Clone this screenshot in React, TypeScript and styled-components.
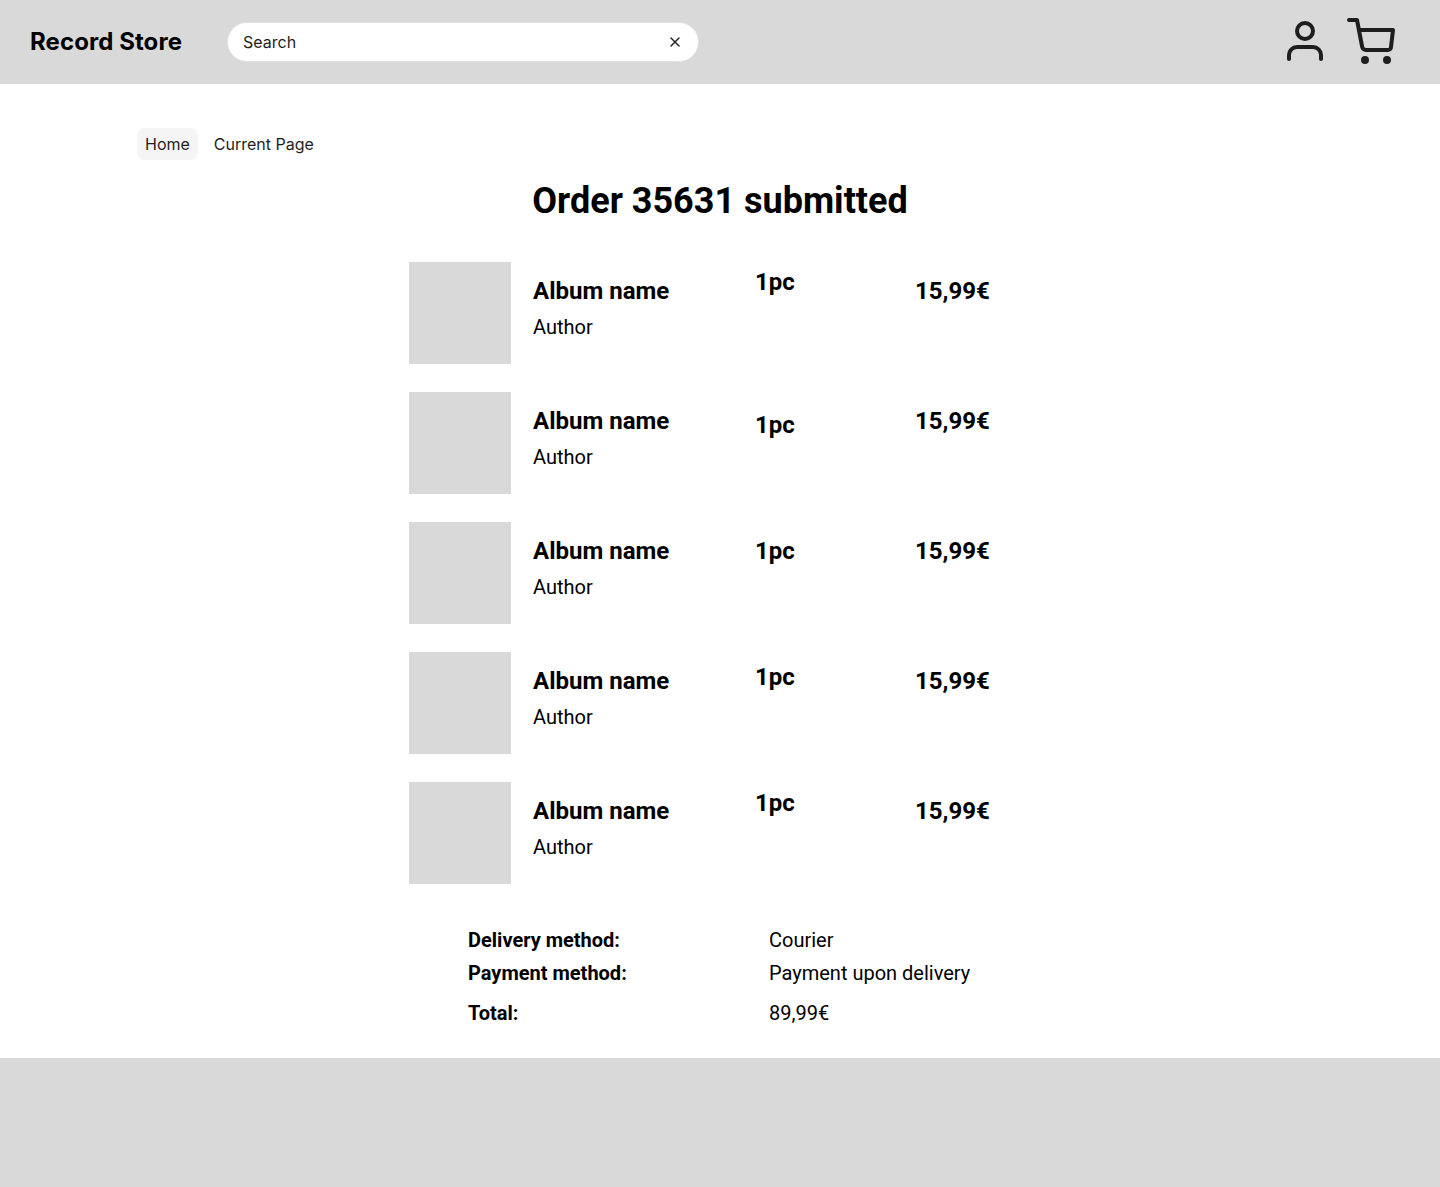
import styled, { createGlobalStyle } from 'styled-components';
import { X } from 'lucide-react';

const orderItems = [
  { id: 1, qtyTop: 6 },
  { id: 2, qtyTop: 19 },
  { id: 3, qtyTop: 15 },
  { id: 4, qtyTop: 11 },
  { id: 5, qtyTop: 7 },
];

const App = () => {
  return (
    <>
      <GlobalStyle />
      <Header>
        <Logo>Record Store</Logo>
        <SearchBox>
          <SearchInput placeholder="Search" />
          <ClearIcon size={16} strokeWidth={2} />
        </SearchBox>
        <HeaderIcons>
          <svg width="40" height="48" viewBox="0 0 40 48" fill="none" stroke="#1e1e1e" strokeWidth="4" strokeLinecap="round">
            <circle cx="20" cy="13" r="8" />
            <path d="M4 41V37a8 8 0 0 1 8-8H28a8 8 0 0 1 8 8V41" />
          </svg>
          <svg width="52" height="48" viewBox="0 0 52 48" fill="none" stroke="#1e1e1e" strokeWidth="4" strokeLinecap="round" strokeLinejoin="round">
            <path d="M4 2H12L17 28a4 4 0 0 0 4 4H43a3 3 0 0 0 3-3L48 12H14" />
            <circle cx="20" cy="42" r="2" fill="#1e1e1e" />
            <circle cx="42" cy="42" r="2" fill="#1e1e1e" />
          </svg>
        </HeaderIcons>
      </Header>

      <Main>
        <Breadcrumbs>
          <Crumb $active>Home</Crumb>
          <Crumb>Current Page</Crumb>
        </Breadcrumbs>

        <Title>Order 35631 submitted</Title>

        <ItemList>
          {orderItems.map((item) => (
            <ItemRow key={item.id}>
              <Cover />
              <ItemInfo>
                <AlbumName>Album name</AlbumName>
                <Author>Author</Author>
              </ItemInfo>
              <Quantity $top={item.qtyTop}>1pc</Quantity>
              <Price>15,99€</Price>
            </ItemRow>
          ))}
        </ItemList>

        <Summary>
          <SummaryRow>
            <SummaryLabel>Delivery method:</SummaryLabel>
            <SummaryValue>Courier</SummaryValue>
          </SummaryRow>
          <SummaryRow>
            <SummaryLabel>Payment method:</SummaryLabel>
            <SummaryValue>Payment upon delivery</SummaryValue>
          </SummaryRow>
          <SummaryRow $spaced>
            <SummaryLabel>Total:</SummaryLabel>
            <SummaryValue>89,99€</SummaryValue>
          </SummaryRow>
        </Summary>
      </Main>

      <Footer />
    </>
  );
};

const GlobalStyle = createGlobalStyle`
  * {
    box-sizing: border-box;
  }

  body {
    margin: 0;
    background-color: #fff;
    font-family: 'Roboto', sans-serif;
    color: #000;
  }
`;

const Header = styled.header`
  display: flex;
  align-items: center;
  height: 84px;
  padding: 0 43px 0 30px;
  background-color: #d9d9d9;
`;

const Logo = styled.div`
  width: 197px;
  margin-top: -1px;
  font-family: 'Inter', sans-serif;
  font-size: 24px;
  font-weight: 700;
  letter-spacing: 0.08px;
  white-space: nowrap;
`;

const SearchBox = styled.div`
  display: flex;
  align-items: center;
  width: 472px;
  height: 40px;
  padding: 0 15px;
  border: 1px solid #e3e3e3;
  border-radius: 20px;
  background-color: #fff;
`;

const SearchInput = styled.input`
  flex: 1;
  min-width: 0;
  border: 0;
  outline: 0;
  padding: 0;
  background: transparent;
  font-family: 'Inter', sans-serif;
  font-size: 16px;
  color: #1e1e1e;

  &::placeholder {
    color: #1e1e1e;
    opacity: 1;
  }
`;

const ClearIcon = styled(X)`
  flex-shrink: 0;
  color: #1e1e1e;
`;

const HeaderIcons = styled.div`
  display: flex;
  align-items: center;
  gap: 20px;
  margin-left: auto;
`;

const Main = styled.main`
  height: 974px;
  padding-top: 44px;
`;

const Breadcrumbs = styled.nav`
  display: flex;
  gap: 8px;
  margin-left: 137px;
`;

const Crumb = styled.span<{ $active?: boolean }>`
  height: 32px;
  padding: 0 8px;
  border-radius: 8px;
  background-color: ${({ $active }) => ($active ? '#f5f5f5' : 'transparent')};
  font-family: 'Inter', sans-serif;
  font-size: 16px;
  line-height: 32px;
  color: #1e1e1e;
`;

const Title = styled.h1`
  margin: 20px 0 0;
  font-size: 36px;
  font-weight: 700;
  line-height: 42px;
  text-align: center;
`;

const ItemList = styled.div`
  display: flex;
  flex-direction: column;
  gap: 28px;
  margin: 40px 0 0 409px;
`;

const ItemRow = styled.div`
  display: grid;
  grid-template-columns: 102px 244px 160px auto;
  align-items: start;
  height: 102px;
`;

const Cover = styled.div`
  width: 102px;
  height: 102px;
  background-color: #d9d9d9;
`;

const ItemInfo = styled.div`
  display: flex;
  flex-direction: column;
  gap: 11px;
  padding: 15px 0 0 22px;
`;

const AlbumName = styled.div`
  font-size: 24px;
  font-weight: 700;
  line-height: 28px;
  white-space: nowrap;
`;

const Author = styled.div`
  font-size: 20px;
  line-height: 23px;
`;

const Quantity = styled.div<{ $top: number }>`
  padding-top: ${({ $top }) => $top}px;
  font-size: 24px;
  font-weight: 700;
  line-height: 28px;
`;

const Price = styled.div`
  padding-top: 15px;
  font-size: 24px;
  font-weight: 700;
  line-height: 28px;
`;

const Summary = styled.section`
  display: flex;
  flex-direction: column;
  gap: 10px;
  margin: 45px 0 0 468px;
`;

const SummaryRow = styled.div<{ $spaced?: boolean }>`
  display: grid;
  grid-template-columns: 301px auto;
  margin-top: ${({ $spaced }) => ($spaced ? '7px' : '0')};
`;

const SummaryLabel = styled.div`
  font-size: 20px;
  font-weight: 700;
  line-height: 23px;
`;

const SummaryValue = styled.div`
  font-size: 20px;
  line-height: 23px;
`;

const Footer = styled.footer`
  height: 129px;
  background-color: #d9d9d9;
`;

export default App;
